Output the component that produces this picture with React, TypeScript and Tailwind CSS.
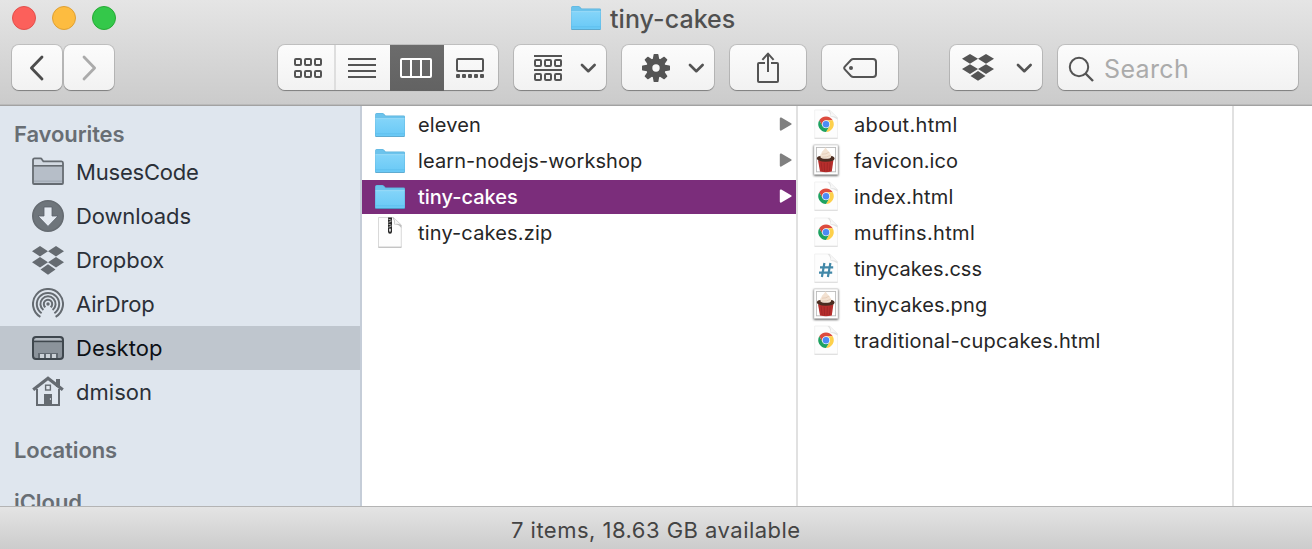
import type { ReactNode } from 'react'
import clsx from 'clsx'

const INK = '#545454'

function Folder() {
  return (
    <svg width="32" height="28" viewBox="0 0 32 28" className="shrink-0">
      <defs>
        <linearGradient id="folder" x1="0" y1="0" x2="0" y2="1">
          <stop offset="0" stopColor="#83d4f9" />
          <stop offset="1" stopColor="#69c9f6" />
        </linearGradient>
      </defs>
      <path d="M1.2 3.5Q1.2 2 2.8 2H8.2Q9.2 2 10 2.8L11.6 4.6H29.5Q31 4.6 31 6V24.6Q31 25.6 30 25.6H2Q1 25.6 1 24.6Z" fill="#5ab2dc" />
      <path d="M1.5 3.8Q1.5 2.5 3 2.5H8Q9 2.5 9.8 3.4L11.3 5.2H29.5Q30.6 5.2 30.6 6.2V8H1.5Z" fill="#6cc3ec" />
      <path d="M1.4 8H30.6V24.2Q30.6 25 29.8 25H2.2Q1.4 25 1.4 24.2Z" fill="url(#folder)" />
      <path d="M1.4 7.6H30.6" stroke="#a5e0fa" strokeWidth=".8" />
      <path d="M1.4 22.8H30.6" stroke="#58b9e8" strokeWidth=".6" />
      <path d="M1.4 25.5H30.6" stroke="#4d9fc8" strokeWidth=".8" />
    </svg>
  )
}

function Page({ children }: { children?: ReactNode }) {
  return (
    <svg width="32" height="32" viewBox="0 0 32 32" className="shrink-0 -translate-y-px">
      <path d="M4.7 2H19.5L27.5 9.5V30H4.7Z" fill="#fdfdfd" stroke="#eeeeee" strokeWidth=".8" />
      <path d="M4.5 30.4H27.7" stroke="#d6d6d6" strokeWidth=".8" />
      <path d="M17.5 2H19.5L27.5 9.5V11.5Q24 8.8 20.6 8.8Q20.6 4.6 17.5 2Z" fill="#e2e2e2" />
      <path d="M19.6 2.3Q21.4 4.8 21 8.3Q24.4 7.8 27.3 9.6Z" fill="#f7f7f7" />
      {children}
    </svg>
  )
}

function ChromePage() {
  return (
    <Page>
      <g transform="translate(16 16.2)">
        <path d="M-6.75 -3.9A7.8 7.8 0 0 1 6.75 -3.9H0A3.9 3.9 0 0 0 -3.4 1.95Z" fill="#dd4b3e" />
        <path d="M6.75 -3.9A7.8 7.8 0 0 1 0 7.8L3.4 1.95A3.9 3.9 0 0 0 0 -3.9Z" fill="#fdd04b" />
        <path d="M0 7.8A7.8 7.8 0 0 1 -6.75 -3.9L-3.4 1.95A3.9 3.9 0 0 0 3.4 1.95Z" fill="#1da261" />
        <circle r="3.8" fill="#e4ecfb" />
        <circle r="3.2" fill="#4c8bf5" />
      </g>
    </Page>
  )
}

function CssPage() {
  return (
    <Page>
      <path d="M14.4 11L11.9 25M20.4 11L17.9 25M10 15.3H23.2M9 20.7H22.2" stroke="#4288a8" strokeWidth="2.2" fill="none" />
    </Page>
  )
}

function ZipPage() {
  return (
    <svg width="32" height="34" viewBox="0 0 32 34" className="shrink-0 -translate-y-px">
      <path d="M4.5 2.5H19.5L27.3 10V32H4.5Z" fill="#fdfdfd" stroke="#cfcfcf" strokeWidth=".8" />
      <path d="M4.3 32.4H27.5" stroke="#b3b3b3" strokeWidth=".8" />
      <path d="M18.5 2.5Q20.8 6 20.3 9.6Q24.5 9 27.3 13V10L19.5 2.5Z" fill="#bdbdbd" />
      <path d="M19.8 3Q21.4 6 21 9Q24.6 8.4 27 10Z" fill="#f5f5f5" />
      <path d="M14 2.5H18V16.5Q18 18.8 16 18.8T14 16.5Z" fill="#262626" />
      <path d="M14.4 4.2L17.4 5.2M14.4 7.2L17.4 6.4M14.4 9.2L17.4 10.2M14.4 12.2L17.4 11.3" stroke="#d8d8d8" strokeWidth=".8" />
      <rect x="15.2" y="13.6" width="1.6" height="3.2" rx=".7" fill="#eee" />
    </svg>
  )
}

function Cupcake() {
  return (
    <svg width="32" height="36" viewBox="0 0 32 36" className="shrink-0 -translate-y-px drop-shadow-[0_1px_1.2px_rgba(0,0,0,0.65)]">
      <rect x="4" y="3" width="24" height="29.5" fill="#fff" stroke="#c9c9c9" strokeWidth=".6" />
      <rect x="6.4" y="5.4" width="19.2" height="24.4" fill="#fff" stroke="#b9b9b9" strokeWidth=".9" />
      <path d="M15.6 5.2C14.4 8 11.8 9 11.3 11.4C9.6 13 9.4 15.4 10.8 16.8H20.8C22.4 15.4 21.8 13 20.2 11.8C20.4 9.6 16.6 8.4 15.6 5.2Z" fill="#f3e2d2" />
      <path d="M12 12.2Q16 12.4 18.8 10.3M11.4 15.2Q16.5 15.6 20.6 13.4" stroke="#dfc4ad" strokeWidth=".7" fill="none" />
      <path d="M8 18.2H23.4L21.8 29.4Q16 31 10 29.4Z" fill="#b62e2c" />
      <path d="M11.2 20.5L12.2 29M14.2 20.8L14.6 29.6M17.4 20.8L17 29.6M20.2 20.5L19.4 29" stroke="#962223" strokeWidth=".6" />
      <path d="M6.8 16.6Q7 14.2 10.4 14Q10 16.2 12.4 16.6Q16 17.2 19.4 16.4Q21.6 15.7 21.2 14Q24.6 14.4 24.6 16.8Q24.2 19.6 15.8 19.8Q7.2 19.6 6.8 16.6Z" fill="#4b2c20" />
    </svg>
  )
}

function DropboxMark({ w, h, color }: { w: number; h: number; color: string }) {
  return (
    <svg width={w} height={h} viewBox="0 0 32 29" preserveAspectRatio="none" className="shrink-0" fill={color}>
      <path d="M8 0L16 5.2L8 10.4L0 5.2ZM24 0L32 5.2L24 10.4L16 5.2ZM8 11L16 16.2L8 21.4L0 16.2ZM24 11L32 16.2L24 21.4L16 16.2ZM16 18.3L23.5 23.5L16 28.7L8.5 23.5Z" />
    </svg>
  )
}

function Chevron() {
  return (
    <svg width="16" height="10" viewBox="0 0 16 10" fill="none" stroke={INK} strokeWidth="2.6" strokeLinecap="round" strokeLinejoin="round">
      <path d="M2 2L8.3 8.2L14.6 2" />
    </svg>
  )
}

function Squares({ y }: { y: number }) {
  return (
    <>
      {[1, 11, 21].map((x) => (
        <rect key={x} x={x} y={y} width="6" height="6" rx="1" />
      ))}
    </>
  )
}

function Gear() {
  return (
    <svg width="28" height="28" viewBox="-14 -14 28 28">
      <g fill={INK}>
        {[0, 45, 90, 135].map((a) => (
          <path key={a} transform={`rotate(${a})`} d="M-3.2 -9L-2.4 -13.4Q-2.3 -14 -1.7 -14H1.7Q2.3 -14 2.4 -13.4L3.2 -9V9L2.4 13.4Q2.3 14 1.7 14H-1.7Q-2.3 14 -2.4 13.4L-3.2 9Z" />
        ))}
        <circle r="9.7" />
      </g>
      <circle r="3.7" fill="#f8f8f8" />
    </svg>
  )
}

const buttonLook =
  'flex h-[45px] items-center rounded-[7px] bg-linear-to-b from-[#fcfcfc] to-[#f2f2f2] shadow-[0_0_0_1px_rgba(0,0,0,0.12),0_1px_1px_rgba(0,0,0,0.3)]'

function Button({ className, children }: { className: string; children: ReactNode }) {
  return <button className={clsx(buttonLook, className)}>{children}</button>
}

function Toolbar() {
  return (
    <div className="flex pt-[9px] pl-[12px]">
      <Button className="w-[50px] justify-center">
        <svg width="16" height="26" viewBox="0 0 16 26" fill="none" stroke="#4c4c4c" strokeWidth="2.8" strokeLinecap="round" strokeLinejoin="round">
          <path d="M13 2L2.4 13L13 24" />
        </svg>
      </Button>
      <Button className="ml-[2px] w-[50px] justify-center">
        <svg width="16" height="26" viewBox="0 0 16 26" fill="none" stroke="#ababab" strokeWidth="2.8" strokeLinecap="round" strokeLinejoin="round">
          <path d="M3 2L13.6 13L3 24" />
        </svg>
      </Button>

      <div className={clsx(buttonLook, 'ml-[164px] w-[220px]')}>
        <div className="flex h-full w-[58px] items-center border-r-2 border-[#dedede] pl-[16px]">
          <svg width="28" height="20" viewBox="0 0 28 20" fill="none" stroke={INK} strokeWidth="2">
            <Squares y={1} />
            <Squares y={13} />
          </svg>
        </div>
        <div className="flex h-full w-[54px] items-center pl-[12px]">
          <svg width="28" height="20" viewBox="0 0 28 20" stroke={INK} strokeWidth="2">
            <path d="M0 1H28M0 7H28M0 13H28M0 19H28" />
          </svg>
        </div>
        <div className="flex h-[46px] w-[54px] items-center self-start bg-linear-to-b from-[#6c6c6c] to-[#626262] pl-[10px]">
          <svg width="32" height="20" viewBox="0 0 32 20" fill="none" stroke="#fff" strokeWidth="2">
            <rect x="1" y="1" width="30" height="18" rx="1" />
            <path d="M11 1V19M21 1V19" />
          </svg>
        </div>
        <div className="flex h-full w-[54px] items-center pl-[12px]">
          <svg width="28" height="20" viewBox="0 0 28 20">
            <rect x="1" y="1" width="26" height="12" rx="1" fill="none" stroke={INK} strokeWidth="2" />
            {[0, 6, 12, 18, 24].map((x) => (
              <rect key={x} x={x} y="16" width="4" height="4" rx="1" fill={INK} />
            ))}
          </svg>
        </div>
      </div>

      <Button className="ml-[16px] w-[92px] gap-[18px] pl-[20px]">
        <svg width="28" height="26" viewBox="0 0 28 26" fill="none" stroke={INK} strokeWidth="2">
          <path d="M0 1H28M0 15H28" />
          <Squares y={5} />
          <Squares y={19} />
        </svg>
        <Chevron />
      </Button>
      <Button className="ml-[16px] w-[92px] gap-[18px] pl-[20px]">
        <Gear />
        <Chevron />
      </Button>
      <Button className="ml-[16px] w-[76px] justify-center">
        <svg width="22" height="32" viewBox="0 0 22 32" fill="none" stroke={INK} strokeWidth="2" strokeLinejoin="round" className="-translate-y-px">
          <path d="M8 12H2Q1 12 1 13V30Q1 31 2 31H20Q21 31 21 30V13Q21 12 20 12H14" />
          <path d="M11 21V3M5.4 8.8L11 2.6L16.6 8.8" />
        </svg>
      </Button>
      <Button className="ml-[16px] w-[76px] justify-center">
        <svg width="34" height="20" viewBox="0 0 34 20" fill="none" stroke={INK} strokeWidth="2">
          <path d="M10.4 1H30Q33 1 33 4V16Q33 19 30 19H10.4Q9 19 8 18L1.8 11.4Q.6 10 1.8 8.6L8 2Q9 1 10.4 1Z" />
          <circle cx="8" cy="10" r="2" fill={INK} stroke="none" />
        </svg>
      </Button>
      <Button className="ml-[52px] w-[92px] gap-[22px] pl-[12px]">
        <DropboxMark w={32} h={27} color={INK} />
        <Chevron />
      </Button>
      <div className={clsx(buttonLook, 'ml-[16px] w-[240px] gap-[10px] pl-[10px]')}>
        <svg width="26" height="26" viewBox="0 0 26 26" fill="none" stroke={INK} strokeWidth="2" className="translate-y-[1px]">
          <circle cx="11" cy="11" r="9.2" />
          <path d="M17.5 17.5L25 25" strokeWidth="2.4" />
        </svg>
        <span className="pt-[3px] text-[25px] leading-8 tracking-[0.36px] text-[#ababab]">Search</span>
      </div>
    </div>
  )
}

const SIDE = '#656b71'

function SideFolder() {
  return (
    <svg width="32" height="28" viewBox="0 0 32 28" className="-translate-y-px">
      <path d="M1 26V3Q1 1.4 2.6 1.4H8.5Q9.4 1.4 10 2.4L11.4 4.4H29.5Q31 4.4 31 6V26Q31 27 30 27H2Q1 27 1 26Z" fill="#d3dae2" stroke={SIDE} strokeWidth="1.8" />
      <path d="M2 9H30V26H2Z" fill="#b6bec8" />
      <path d="M1 8.8H31" stroke={SIDE} strokeWidth="1.6" />
      <path d="M2 24.2H30" stroke="#a5aeb8" strokeWidth="1.6" />
    </svg>
  )
}

function SideDownload() {
  return (
    <svg width="32" height="32" viewBox="0 0 32 32">
      <circle cx="16" cy="16" r="15.2" fill="#6e757b" stroke={SIDE} strokeWidth="1.6" />
      <path d="M12 7H20V16H26L16 26.4L6 16H12Z" fill="#e4eaf1" stroke="#59616a" strokeWidth=".8" />
    </svg>
  )
}

function SideAirDrop() {
  return (
    <svg width="32" height="32" viewBox="-16 -16 32 32" fill="none" stroke={SIDE} strokeWidth="2">
      <path d="M-7.6 12.9A15 15 0 1 1 7.6 12.9" />
      <path d="M-6.4 9.3A11.2 11.2 0 1 1 6.4 9.3" />
      <path d="M-4.6 6A7.6 7.6 0 1 1 4.6 6" />
      <path d="M-2.6 3.3A4.2 4.2 0 1 1 2.6 3.3" />
      <circle r="1.7" fill={SIDE} stroke="none" />
    </svg>
  )
}

function SideDesktop() {
  return (
    <svg width="32" height="24" viewBox="0 0 32 24">
      <rect x="1" y="1" width="30" height="22" rx="3" fill="#8b939b" />
      <path d="M2 5V4Q2 2 4 2H28Q30 2 30 4V5Z" fill="#b3bac1" />
      <rect x="1" y="1" width="30" height="22" rx="3" fill="none" stroke="#3f474e" strokeWidth="2" />
      <path d="M1 5.4H31" stroke="#3f474e" strokeWidth="1.6" />
      <path d="M6 17H26V22H6Z" fill="#626a72" />
      <path d="M8 18H12V22H8ZM14 18H18V22H14ZM20 18H24V22H20Z" fill="#ccd2d8" />
    </svg>
  )
}

function SideHome() {
  return (
    <svg width="32" height="32" viewBox="0 0 32 32" fill="none" stroke={SIDE}>
      <path d="M24 3H28V11H24Z" fill={SIDE} stroke="none" />
      <path d="M5 13V29H27V13" strokeWidth="2" />
      <path d="M1.2 13.8L16 2.2L30.8 13.8" strokeWidth="3.2" />
      <rect x="13.6" y="9.2" width="4.8" height="4.8" strokeWidth="1.4" fill="#e3e9f0" />
      <path d="M12 18H20V29H12Z" fill={SIDE} stroke="none" />
      <path d="M18.4 22V24" stroke="#c9d0d8" strokeWidth="1" />
    </svg>
  )
}

const places = [
  { label: 'MusesCode', track: 'tracking-[-0.2px]', icon: <SideFolder /> },
  { label: 'Downloads', track: 'tracking-[-0.1px]', icon: <SideDownload /> },
  { label: 'Dropbox', track: 'tracking-[-0.05px]', icon: <DropboxMark w={32} h={29} color={SIDE} /> },
  { label: 'AirDrop', track: 'tracking-[-0.15px]', icon: <SideAirDrop /> },
  { label: 'Desktop', track: 'tracking-[0.09px]', icon: <SideDesktop />, current: true },
  { label: 'dmison', track: 'tracking-[0.03px]', icon: <SideHome /> },
]

function Sidebar() {
  return (
    <nav className="h-full w-[362px] shrink-0 overflow-hidden border-r-2 border-[#c5cdd8] bg-[#dfe6ee] pt-[12px] text-[22px] text-[#2b3038]">
      <h2 className="h-[32px] pl-[14px] leading-8 font-semibold tracking-[-0.1px] text-[#686e74]">Favourites</h2>
      {places.map((p) => (
        <div key={p.label} className={clsx('flex h-[44px] items-center gap-[12px] pl-[32px]', p.current && 'bg-[#bfc6ce] text-[#0c1016]')}>
          {p.icon}
          <span className={p.track}>{p.label}</span>
        </div>
      ))}
      <h2 className="mt-[20px] h-[32px] pl-[14px] leading-8 font-semibold tracking-[-0.1px] text-[#686e74]">Locations</h2>
      <h2 className="mt-[20px] h-[32px] pl-[14px] leading-8 font-semibold tracking-[-0.06px] text-[#686e74]">iCloud</h2>
    </nav>
  )
}

type Entry = { label: string; track: string; icon: ReactNode; opens?: boolean; selected?: boolean }

const desktopFiles: Entry[] = [
  { label: 'eleven', track: 'tracking-[0.14px]', icon: <Folder />, opens: true },
  { label: 'learn-nodejs-workshop', track: 'tracking-[0.09px]', icon: <Folder />, opens: true },
  { label: 'tiny-cakes', track: '', icon: <Folder />, opens: true, selected: true },
  { label: 'tiny-cakes.zip', track: 'tracking-[0.16px]', icon: <ZipPage /> },
]

const siteFiles: Entry[] = [
  { label: 'about.html', track: 'tracking-[0.33px]', icon: <ChromePage /> },
  { label: 'favicon.ico', track: 'tracking-[0.06px]', icon: <Cupcake /> },
  { label: 'index.html', track: 'tracking-[0.2px]', icon: <ChromePage /> },
  { label: 'muffins.html', track: 'tracking-[0.34px]', icon: <ChromePage /> },
  { label: 'tinycakes.css', track: 'tracking-[0.03px]', icon: <CssPage /> },
  { label: 'tinycakes.png', track: 'tracking-[0.15px]', icon: <Cupcake /> },
  { label: 'traditional-cupcakes.html', track: 'tracking-[0.25px]', icon: <ChromePage /> },
]

function Column({ entries }: { entries: Entry[] }) {
  return (
    <ul className="flex h-full w-[436px] shrink-0 flex-col gap-[2px] border-r-2 border-[#e1e1e1] pt-[2px] text-[20px] text-[#262626]">
      {entries.map((e) => (
        <li key={e.label} className={clsx('flex h-[34px] items-center pr-[4px] pl-[12px]', e.selected && 'bg-[#7b2d7b] font-medium text-white')}>
          {e.icon}
          <span className={clsx('ml-[12px] grow', e.track)}>{e.label}</span>
          {e.opens && (
            <svg width="13" height="16" viewBox="0 0 13 16" className={clsx('-translate-y-px', e.selected ? 'fill-white stroke-white' : 'fill-[#808080] stroke-[#808080]')} strokeWidth="2" strokeLinejoin="round">
              <path d="M1.8 2.4L11.6 8L1.8 13.6Z" />
            </svg>
          )}
        </li>
      ))}
    </ul>
  )
}

export default function App() {
  return (
    <div className="flex h-[549px] w-[1312px] flex-col overflow-hidden bg-white font-[Inter,sans-serif]">
      <header className="h-[106px] shrink-0 border-b border-[#a2a2a2] bg-linear-to-b from-[#e5e5e5] to-[#cbcbcb] shadow-[inset_0_-1px_0_#bababa]">
        <div className="flex h-[36px] items-center pl-[12px]">
          <div className="flex gap-4">
            <span className="size-6 rounded-full border border-[#e2504c] bg-[#fc605b]" />
            <span className="size-6 rounded-full border border-[#dfa034] bg-[#fdbc40]" />
            <span className="size-6 rounded-full border border-[#27aa35] bg-[#34c84a]" />
          </div>
          <div className="ml-[454px] flex items-center gap-[8px]">
            <Folder />
            <h1 className="pt-[2px] text-[25px] leading-8 font-medium tracking-[0.05px] text-[#505050]">tiny-cakes</h1>
          </div>
        </div>
        <Toolbar />
      </header>
      <main className="flex h-[400px] shrink-0">
        <Sidebar />
        <Column entries={desktopFiles} />
        <Column entries={siteFiles} />
      </main>
      <footer className="flex h-[43px] items-center border-t border-[#b4b4b4] bg-linear-to-b from-[#e4e4e4] to-[#cccccc] pt-[5px] pl-[511px] text-[22px] tracking-[0.48px] text-[#444]">
        7 items, 18.63 GB available
      </footer>
    </div>
  )
}
